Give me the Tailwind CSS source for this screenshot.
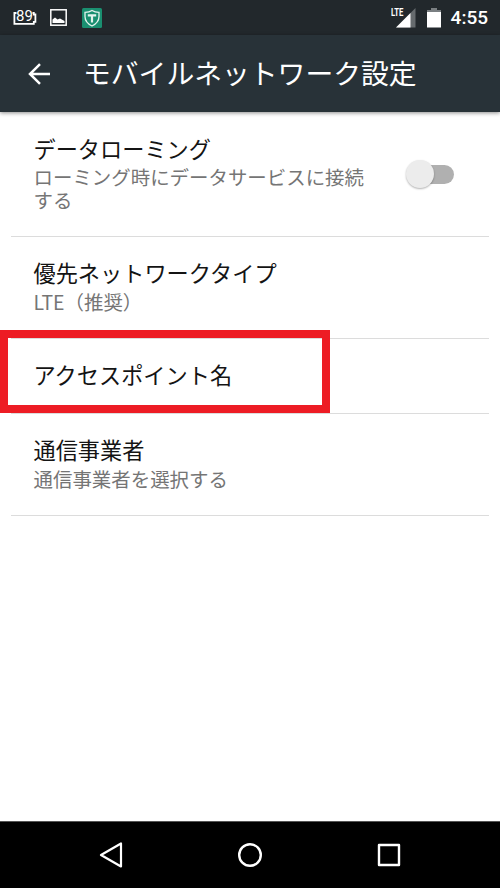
<!DOCTYPE html>
<html lang="ja">
<head>
  <meta charset="UTF-8" />
  <meta name="viewport" content="width=device-width, initial-scale=1.0" />
  <title>モバイルネットワーク設定</title>
  <script src="https://cdn.jsdelivr.net/npm/@tailwindcss/browser@4"></script>
</head>
<body class="bg-white font-['Noto_Sans_CJK_JP',sans-serif] overflow-hidden">
  <div class="flex flex-col w-[500px] h-[888px]">
    <!-- Status bar -->
    <div class="flex items-center justify-between h-[35px] bg-[#22282c] shrink-0 pl-[13px] pr-[12px] text-white">
      <div class="flex items-center">
        <div class="relative w-6 h-[16px]">
          <svg class="absolute inset-0" width="24" height="16" viewBox="0 0 24 16" fill="none" stroke="#fff" stroke-width="1.8">
            <path d="M3.5 3H1.4V13.8H20.8V11.8H22.4V4.5H20.8V3H19.5" />
          </svg>
          <span class="absolute left-[3px] -top-[3px] font-['Roboto',sans-serif] text-[15px] leading-[18px]">89</span>
        </div>
        <svg class="ml-[13px]" width="17" height="17" viewBox="0 0 17 17">
          <rect x=".8" y=".8" width="15.4" height="15.4" fill="none" stroke="#fff" stroke-width="1.5" />
          <path d="M2.5 14V10.5L5 8.5L7.5 10.5L10 9.5L14.5 12V14Z" fill="#fff" />
        </svg>
        <svg class="ml-[15px]" width="20" height="20" viewBox="0 0 20 20">
          <rect width="20" height="20" rx="1.5" fill="#1a8f70" />
          <path d="M10 2.5C7.8 4 5.4 4.4 3 4.4V8.5C3 13 6 16 10 18C14 16 17 13 17 8.5V4.4C14.6 4.4 12.2 4 10 2.5Z" fill="none" stroke="#e4f3ee" stroke-width="1.3" />
          <path d="M5.8 7.3H14.2M10 7.3V14.5" stroke="#e4f3ee" stroke-width="2.2" />
        </svg>
      </div>
      <div class="flex items-center">
        <div class="relative w-[25px] h-[20px]">
          <svg class="absolute inset-0" width="25" height="20" viewBox="0 0 25 20">
            <path d="M24.5 0V19.5H5Z" fill="#666b6e" />
            <path d="M19.5 5V19.5H5Z" fill="#fff" />
          </svg>
          <span class="absolute left-0 -top-px bg-[#22282c] font-['Roboto',sans-serif] font-bold text-[11px] leading-[11px] w-[14px]"><span class="block origin-left scale-x-[.7]">LTE</span></span>
        </div>
        <svg class="ml-[11px]" width="14" height="20" viewBox="0 0 14 20">
          <path d="M4 0H10V2H14V5H0V2H4Z" fill="#7a7f82" />
          <path d="M0 4H14V19.5H0Z" fill="#fff" />
        </svg>
        <span class="ml-[10px] font-['Roboto',sans-serif] font-medium text-[19px] leading-6">4:55</span>
      </div>
    </div>

    <!-- App bar -->
    <div class="flex items-center h-[77px] bg-[#283238] shrink-0 pl-7 text-white shadow-[0_1px_4px_rgba(0,0,0,0.45)]">
      <svg width="23" height="22" viewBox="0 0 23 22" fill="none" stroke="#fff" stroke-width="2.5">
        <path d="M12 1.2L2 11L12 20.8M2 11H22" />
      </svg>
      <h1 class="ml-8 pb-1 text-[27.8px] leading-10">モバイルネットワーク設定</h1>
    </div>

    <!-- Settings list -->
    <div class="flex-1 mx-[11px] text-[#141414]">
      <div class="flex h-[125px] border-b border-[#dcdcdc] pl-[22.5px] pt-[21px]">
        <div class="w-[340px]">
          <p class="text-[22.2px] leading-[30px]">データローミング</p>
          <p class="mt-[3px] text-[19.45px] leading-[22.5px] text-[#757575]">ローミング時にデータサービスに接続する</p>
        </div>
        <div class="relative ml-[32.5px] mt-[27px] w-[48px] h-[28px]">
          <div class="absolute left-2 top-[5px] w-10 h-[19px] rounded-full bg-[#b0b0b0]"></div>
          <div class="absolute left-0 top-0 w-7 h-7 rounded-full bg-[#ececec] shadow-[0_1px_2px_rgba(0,0,0,0.3)]"></div>
        </div>
      </div>
      <div class="h-[102px] border-b border-[#dcdcdc] pl-[22.5px] pt-5">
        <p class="text-[22.2px] leading-[30px]">優先ネットワークタイプ</p>
        <p class="mt-[3px] text-[19.45px] leading-[23px] text-[#757575]">LTE（推奨）</p>
      </div>
      <div class="relative h-[75px] border-b border-[#dcdcdc] pl-[22.5px] pt-5">
        <p class="text-[22.2px] leading-[30px]">アクセスポイント名</p>
        <!-- Red highlight frame -->
        <div class="absolute -left-[11px] -top-[9px] w-[330px] h-[83px] border-8 border-[#ed1c24]"></div>
      </div>
      <div class="h-[102px] border-b border-[#dcdcdc] pl-[22.5px] pt-5">
        <p class="text-[22.2px] leading-[30px]">通信事業者</p>
        <p class="mt-[3px] text-[19.45px] leading-[23px] text-[#757575]">通信事業者を選択する</p>
      </div>
    </div>

    <!-- Navigation bar -->
    <div class="flex items-center justify-between h-[67px] bg-black border-t border-[#555] shrink-0 px-[99px]">
      <svg width="24" height="26" viewBox="0 0 24 26" fill="none" stroke="#fff" stroke-width="2.2" stroke-linejoin="round">
        <path d="M22 1.5V24.5L2 13Z" />
      </svg>
      <svg width="24" height="24" viewBox="0 0 24 24" fill="none" stroke="#fff" stroke-width="2.4">
        <circle cx="12" cy="12" r="10.8" />
      </svg>
      <svg width="24" height="24" viewBox="0 0 24 24" fill="none" stroke="#fff" stroke-width="2.4" stroke-linejoin="round">
        <rect x="2" y="2" width="20" height="20" />
      </svg>
    </div>
  </div>
</body>
</html>
